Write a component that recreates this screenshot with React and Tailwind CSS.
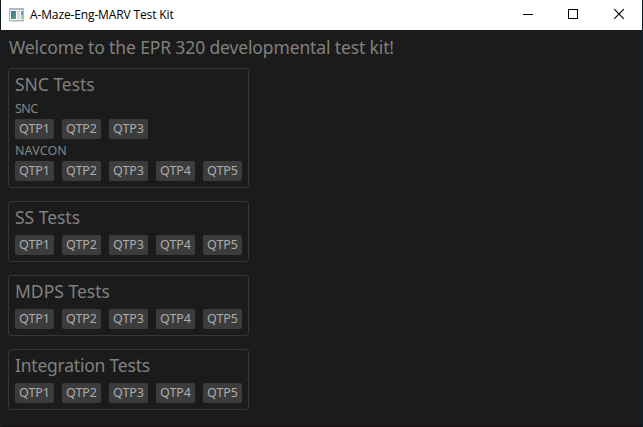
import React from "react";

const FIVE = ["QTP1", "QTP2", "QTP3", "QTP4", "QTP5"];

function ButtonRow({ labels }) {
  return (
    <div className="flex h-5 gap-2">
      {labels.map((label) => (
        <button
          key={label}
          className="flex h-5 w-[39px] items-center justify-center rounded-[2px] bg-[#3c3c3c] text-[12.5px] leading-5 tracking-[-0.05px] whitespace-nowrap text-[#acacac]"
        >
          {label}
        </button>
      ))}
    </div>
  );
}

function Heading({ children, className }) {
  return (
    <h2 className={`h-[22px] text-[17.5px] leading-[22px] font-normal whitespace-nowrap text-[#808080] ${className}`}>
      {children}
    </h2>
  );
}

function Label({ children, className }) {
  return (
    <div className={`h-[22px] text-[12.5px] leading-[22px] whitespace-nowrap text-[#858585] ${className}`}>
      {children}
    </div>
  );
}

function Card({ title, titleClass, children }) {
  return (
    <section className="w-[241px] rounded-[3px] border border-[#363636] px-1.5 pt-1 pb-1.5">
      <Heading className={titleClass}>{title}</Heading>
      {children}
    </section>
  );
}

function TitleBar() {
  return (
    <header className="flex h-[30px] items-center bg-white pl-2">
      <svg width="16" height="14" viewBox="0 0 16 14" shapeRendering="crispEdges">
        <defs>
          <linearGradient id="pane" x1="0" y1="0" x2="1" y2="1">
            <stop offset="0" stopColor="#3f70ae" />
            <stop offset="0.5" stopColor="#438c91" />
            <stop offset="1" stopColor="#57a66b" />
          </linearGradient>
        </defs>
        <rect x="0" y="0" width="15" height="13" fill="#b5b8bf" />
        <rect x="1" y="2" width="13" height="10" fill="#f3f3f3" />
        <rect x="2" y="3" width="5" height="8" fill="url(#pane)" />
        <rect x="8" y="3" width="3" height="8" fill="#dedede" />
        <rect x="12" y="3" width="2" height="4" fill="#7898ba" />
        <rect x="12" y="7" width="2" height="4" fill="#a7c9b4" />
        <path d="M15 1v13H1v-1h14" fill="#dadada" />
      </svg>
      <h1 className="ml-[5px] flex-1 font-['Open_Sans','Noto_Sans',sans-serif] text-[12px] leading-[30px] tracking-[-0.13px] whitespace-nowrap text-black">
        A-Maze-Eng-MARV Test Kit
      </h1>
      <svg width="137" height="30" viewBox="505 0 137 30" fill="none" stroke="#000">
        <path d="M523 14.5h10" shapeRendering="crispEdges" />
        <path d="M568.5 9.5h9v9h-9z" shapeRendering="crispEdges" />
        <path d="M614.2 9.2l9.6 9.6M623.8 9.2l-9.6 9.6" strokeWidth="1.1" />
      </svg>
    </header>
  );
}

export default function App() {
  return (
    <div className="h-[427px] w-[643px] overflow-hidden border-x border-[#141c24] bg-[#1b1b1b] font-['Noto_Sans','Open_Sans',sans-serif]">
      <TitleBar />
      <main className="flex h-[397px] flex-col border-b border-[#171214] pt-1.5 pl-[7px]">
        <Heading className="mb-2.5 ml-px tracking-[-0.13px]">
          Welcome to the EPR 320 developmental test kit!
        </Heading>
        <div className="flex flex-col gap-[13px]">
          <Card title="SNC Tests" titleClass="tracking-[-0.03px]">
            <Label className="mt-[3px] -mb-px tracking-[-0.6px]">SNC</Label>
            <ButtonRow labels={["QTP1", "QTP2", "QTP3"]} />
            <Label className="pt-px tracking-[0.1px]">NAVCON</Label>
            <ButtonRow labels={FIVE} />
          </Card>
          <Card title="SS Tests" titleClass="mb-[7px] tracking-[-0.03px]">
            <ButtonRow labels={FIVE} />
          </Card>
          <Card title="MDPS Tests" titleClass="mb-[7px] tracking-[0px]">
            <ButtonRow labels={FIVE} />
          </Card>
          <Card title="Integration Tests" titleClass="mb-[7px] tracking-[-0.22px]">
            <ButtonRow labels={FIVE} />
          </Card>
        </div>
      </main>
    </div>
  );
}
